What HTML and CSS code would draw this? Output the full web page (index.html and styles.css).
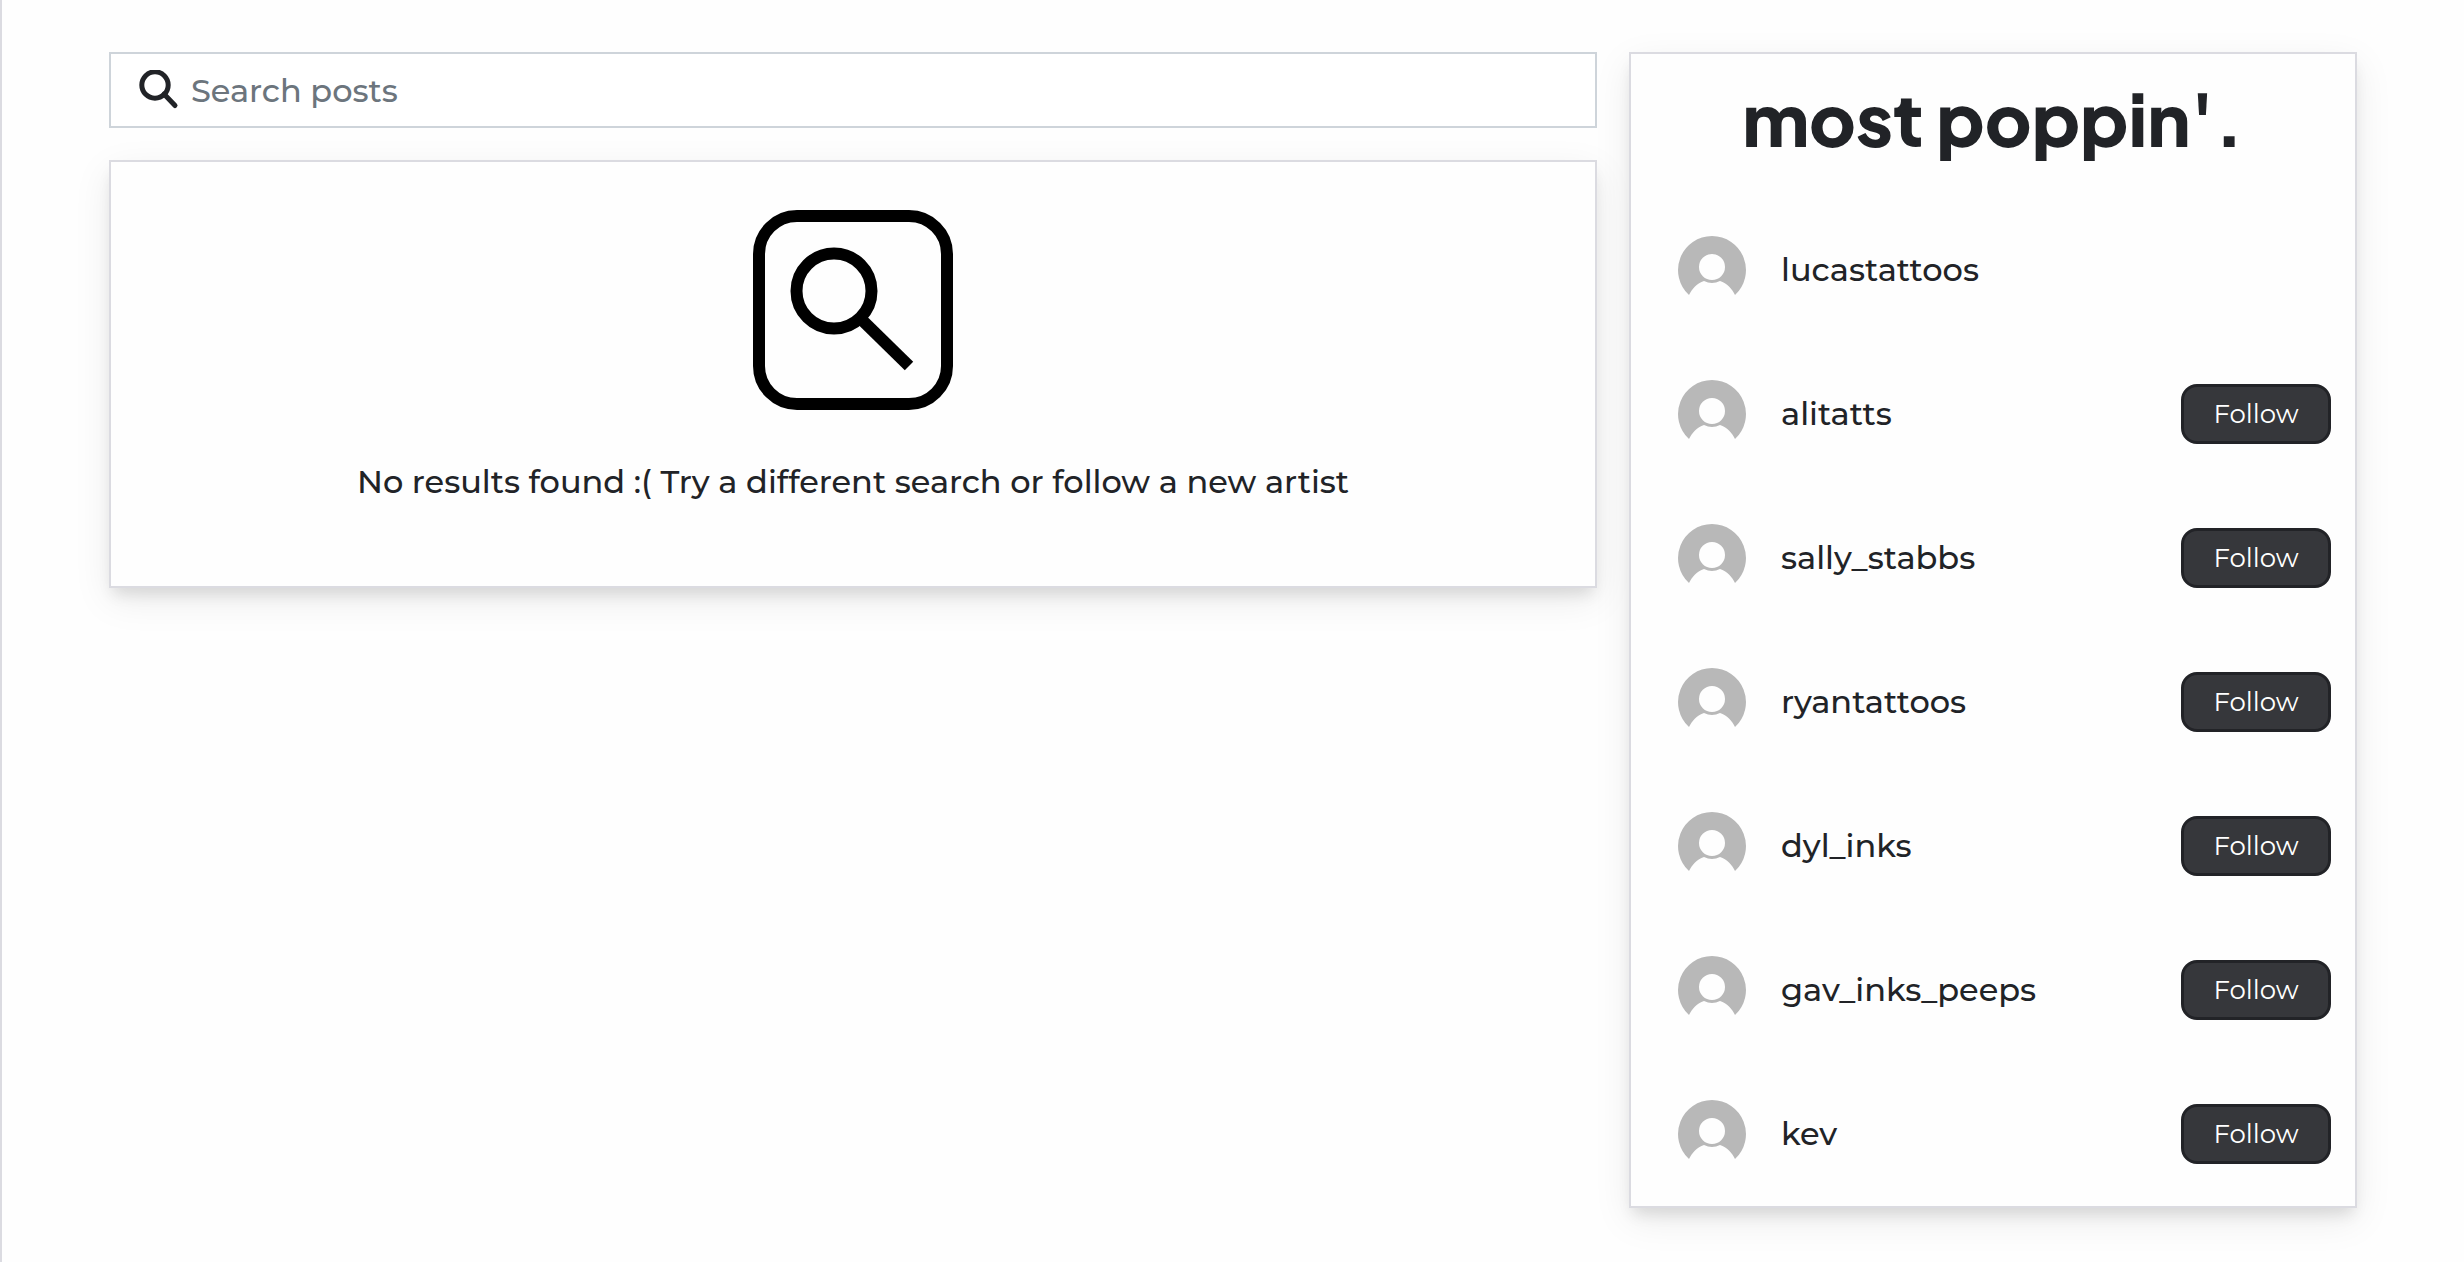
FILE: index.html
```html
<!DOCTYPE html>
<html lang="en">
<head>
<meta charset="utf-8">
<title>Posts</title>
<meta name="viewport" content="width=device-width, initial-scale=1">
<link rel="stylesheet" href="styles.css">
</head>
<body>
<svg class="sprite" aria-hidden="true">
  <symbol id="avatar" viewBox="0 0 68 68">
    <path fill="#b8b8b8" fill-rule="evenodd" d="M34 0a34 34 0 0 1 23 59c-3-6-8-12-15-14q-8 4-16 0c-7 2-12 8-15 14A34 34 0 0 1 34 0zM34 18a13 13 0 1 0 0 26a13 13 0 0 0 0-26z"/>
  </symbol>
</svg>
<div class="page">
  <main class="feed">
    <form class="search" role="search">
      <label class="search-label" for="search" aria-label="Search posts">
        <svg class="search-icon" viewBox="0 0 40 40"><circle cx="16" cy="15" r="13.2"/><path d="M25 24L36 35.500"/></svg>
      </label>
      <input class="search-input" id="search" type="text" placeholder="Search posts">
    </form>
    <section class="card empty">
      <svg class="empty-icon" viewBox="0 0 200 200" aria-hidden="true"><rect x="6" y="6" width="188" height="188" rx="38"/><circle cx="81" cy="81" r="37.500"/><path d="M108 109L156 156"/></svg>
      <p class="empty-text">No results found :( Try a different search or follow a new artist</p>
    </section>
  </main>
  <aside class="card popular">
    <h2 class="title">most poppin'.</h2>
    <ul class="list">
      <li class="row"><a class="profile" href="#"><svg class="avatar"><use href="#avatar"/></svg><span>lucastattoos</span></a></li>
      <li class="row"><a class="profile" href="#"><svg class="avatar"><use href="#avatar"/></svg><span>alitatts</span></a><button class="follow" type="button">Follow</button></li>
      <li class="row"><a class="profile" href="#"><svg class="avatar"><use href="#avatar"/></svg><span>sally_stabbs</span></a><button class="follow" type="button">Follow</button></li>
      <li class="row"><a class="profile" href="#"><svg class="avatar"><use href="#avatar"/></svg><span>ryantattoos</span></a><button class="follow" type="button">Follow</button></li>
      <li class="row"><a class="profile" href="#"><svg class="avatar"><use href="#avatar"/></svg><span>dyl_inks</span></a><button class="follow" type="button">Follow</button></li>
      <li class="row"><a class="profile" href="#"><svg class="avatar"><use href="#avatar"/></svg><span>gav_inks_peeps</span></a><button class="follow" type="button">Follow</button></li>
      <li class="row"><a class="profile" href="#"><svg class="avatar"><use href="#avatar"/></svg><span>kev</span></a><button class="follow" type="button">Follow</button></li>
    </ul>
  </aside>
</div>
</body>
</html>
```
FILE: styles.css
```css
* { box-sizing: border-box; }

body {
  margin: 0;
  min-height: 100vh;
  border-left: 2px solid #dbdbe1;
  background: #fefefe;
  color: #212327;
  font-family: Montserrat, Inter, sans-serif;
  font-size: 32px;
  font-weight: 500;
  line-height: 48px;
}

.sprite { display: none; }

.page {
  display: grid;
  grid-template-columns: 1488fr 728fr;
  gap: 32px;
  align-items: start;
  padding: 52px 107px 52px 107px;
}

.feed {
  display: flex;
  flex-direction: column;
  gap: 32px;
}

.search {
  display: flex;
  align-items: center;
  height: 76px;
  padding: 0 28px;
  border: 2px solid #ced4da;
  background: #fff;
}

.search-label { display: flex; }

.search-icon {
  width: 40px;
  height: 40px;
  fill: none;
  stroke: #212327;
  stroke-width: 5;
  stroke-linecap: round;
}

.search-input {
  flex: 1;
  min-width: 0;
  padding: 2px 12px 0;
  border: 0;
  outline: 0;
  background: none;
  color: inherit;
  font: inherit;
}

.search-input::placeholder { color: #6c757d; opacity: 1; }

.card {
  border: 2px solid #dbdbe1;
  background: #fefefe;
  box-shadow: 0 10px 14px -4px rgba(0, 0, 0, 0.11), 0 12px 36px rgba(0, 0, 0, 0.08);
}

.empty {
  display: flex;
  flex-direction: column;
  align-items: center;
  gap: 48px;
  padding: 48px 48px 80px;
}

.empty-icon {
  width: 200px;
  height: 200px;
  fill: none;
  stroke: #000;
  stroke-width: 12;
}

.empty-text { margin: 0; text-align: center; }

.popular { padding: 16px 24px 0 47px; }

.title {
  margin: 0 23px 32px 0;
  font-family: "Plus Jakarta Sans", Inter, sans-serif;
  font-size: 72px;
  font-weight: 800;
  line-height: 96px;
  text-align: center;
}

.list {
  margin: 0;
  padding: 0;
  list-style: none;
}

.row {
  display: flex;
  align-items: center;
  justify-content: space-between;
  height: 144px;
}

.profile {
  display: flex;
  align-items: center;
  gap: 35px;
  color: inherit;
  text-decoration: none;
}

.avatar { width: 68px; height: 68px; }

.follow {
  width: 150px;
  height: 60px;
  padding: 0;
  border: 3px solid #222327;
  border-radius: 16px;
  background: #36373b;
  color: #fff;
  font: inherit;
  font-size: 26px;
  font-weight: 400;
}
```
